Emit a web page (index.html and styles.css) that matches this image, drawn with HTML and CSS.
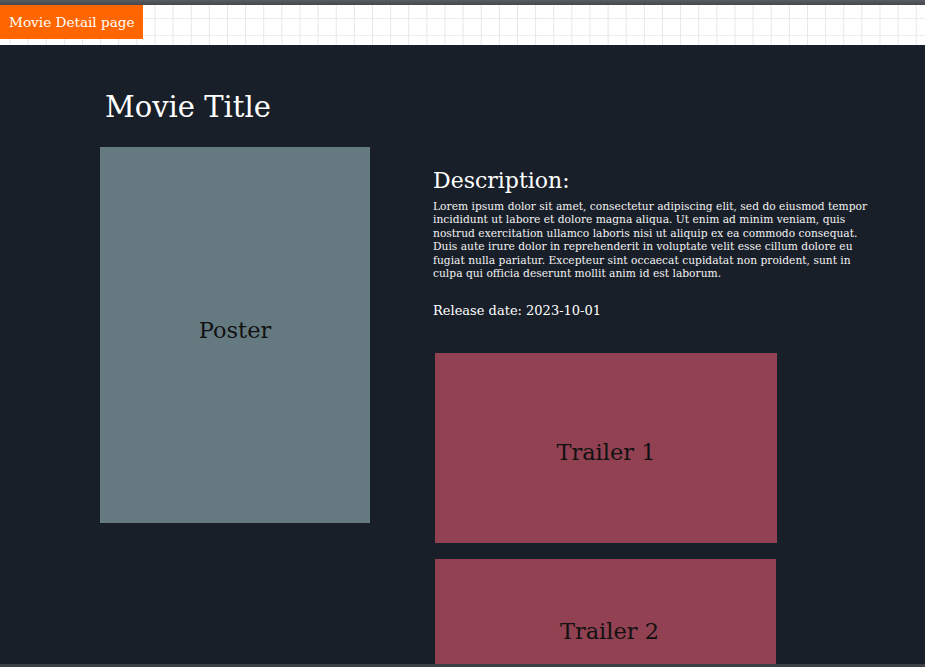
FILE: index.html
```html
<!DOCTYPE html>
<html lang="en">
<head>
<meta charset="utf-8">
<title>Movie Detail page</title>
<link rel="stylesheet" href="styles.css">
</head>
<body>
<div class="topbar"></div>
<header class="header">
  <div class="tab">Movie Detail page</div>
</header>
<main class="page">
  <h1 class="title">Movie Title</h1>
  <div class="content">
    <div class="poster">Poster</div>
    <section class="details">
      <h2 class="desc-heading">Description:</h2>
      <p class="desc">Lorem ipsum dolor sit amet, consectetur adipiscing elit, sed do eiusmod tempor incididunt ut labore et dolore magna aliqua. Ut enim ad minim veniam, quis nostrud exercitation ullamco laboris nisi ut aliquip ex ea commodo consequat. Duis aute irure dolor in reprehenderit in voluptate velit esse cillum dolore eu fugiat nulla pariatur. Excepteur sint occaecat cupidatat non proident, sunt in culpa qui officia deserunt mollit anim id est laborum.</p>
      <p class="release">Release date: 2023-10-01</p>
      <div class="trailers">
        <div class="trailer">Trailer 1</div>
        <div class="trailer trailer-second">Trailer 2</div>
      </div>
    </section>
  </div>
</main>
<div class="bottombar"></div>
</body>
</html>
```
FILE: styles.css
```css
html, body {
  margin: 0;
  padding: 0;
  height: 100%;
  overflow: hidden;
  background: #191f29;
  font-family: "DejaVu Serif", serif;
}

.topbar {
  height: 5px;
  background: linear-gradient(#5a5e63, #44474c);
}

.header {
  height: 40px;
  background-color: #ffffff;
  background-image:
    linear-gradient(to right, #e6e6e6 1px, transparent 1px),
    linear-gradient(to bottom, #ececec 1px, transparent 1px);
  background-size: 18.13px 100%, 100% 17px;
  background-position: 9.5px 0, 0 13px;
  display: flex;
  align-items: flex-start;
}

.tab {
  background: #ff6600;
  color: #ffffff;
  font-size: 13.6px;
  height: 34px;
  padding: 0 9px;
  display: flex;
  align-items: center;
  width: 125px;
  white-space: nowrap;
}

.page {
  height: 619px;
  background: #191f29;
  color: #ffffff;
  overflow: hidden;
}

.title {
  margin: 0;
  padding: 44px 0 0 105px;
  font-size: 29px;
  font-weight: normal;
  line-height: 36px;
}

.content {
  display: flex;
  padding-left: 100px;
  margin-top: 22px;
}

.poster {
  width: 270px;
  height: 376px;
  flex: none;
  box-sizing: border-box;
  padding-bottom: 10px;
  background: #647a80;
  color: #111111;
  font-size: 22.5px;
  display: flex;
  align-items: center;
  justify-content: center;
}

.details {
  margin-left: 63px;
  padding-top: 20px;
  width: 442px;
}

.desc-heading {
  margin: 0;
  font-size: 22px;
  font-weight: normal;
  line-height: 28px;
}

.desc {
  margin: 5px 0 0;
  font-size: 10.7px;
  line-height: 13.4px;
  color: #f2f2f2;
}

.release {
  margin: 23px 0 0;
  font-size: 13px;
  line-height: 16px;
}

.trailers {
  margin: 34px 0 0 2px;
  display: flex;
  flex-direction: column;
  gap: 16px;
}

.trailer {
  width: 342px;
  height: 190px;
  box-sizing: border-box;
  padding-top: 8px;
  flex: none;
  background: #914152;
  color: #111111;
  font-size: 22.5px;
  display: flex;
  align-items: center;
  justify-content: center;
}

.trailer-second {
  width: 341px;
  height: 136px;
  padding-left: 8px;
}

.bottombar {
  height: 3px;
  background: #3d4044;
}
```
